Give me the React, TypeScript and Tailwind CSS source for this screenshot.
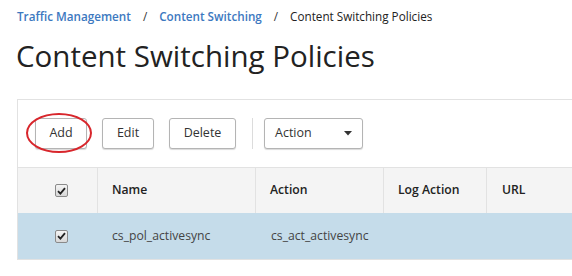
function Check() {
  return (
    <span className="inline-flex h-[13px] w-[13px] items-center justify-center rounded-[2px] border border-[#8a8a8a] bg-gradient-to-b from-[#f4f4f4] to-[#d8d8d8]">
      <svg width="9" height="8" viewBox="0 0 9 8">
        <path d="M1 4.2 L3.4 6.6 L8 1.2" fill="none" stroke="#222" strokeWidth="1.8" />
      </svg>
    </span>
  );
}

function Btn({ label, w }: { label: string; w: string }) {
  return (
    <button className={`h-[31px] ${w} rounded-[3px] border border-[#b4b4b4] bg-white text-[12.5px] text-[#333] shadow-[0_1px_1px_rgba(0,0,0,0.15)]`}>
      {label}
    </button>
  );
}

export default function App() {
  return (
    <div className="h-[276px] w-[572px] overflow-hidden bg-white font-['Open_Sans',sans-serif] text-[#333]">
      <div className="flex items-center gap-[12px] pl-[17px] pt-[7px] text-[11.7px] leading-[18px]">
        <span className="font-semibold text-[#3c78c0]">Traffic Management</span>
        <span>/</span>
        <span className="font-semibold text-[#3c78c0]">Content Switching</span>
        <span>/</span>
        <span className="text-[#222]">Content Switching Policies</span>
      </div>
      <h1 className="pl-[16px] pt-[11px] text-[29.5px] leading-[40px] text-[#222]">Content Switching Policies</h1>

      <div className="ml-[17px] mt-[23px] border-l border-t border-[#e2e2e2]">
        <div className="flex h-[67px] items-center pl-[17px]">
          <div className="relative">
            <Btn label="Add" w="w-[52px]" />
            <div className="pointer-events-none absolute left-[-9px] top-[-5px] h-[40px] w-[66px] rounded-[50%] border-[2.5px] border-[#d8262c]" />
          </div>
          <div className="ml-[15px]"><Btn label="Edit" w="w-[52px]" /></div>
          <div className="ml-[15px]"><Btn label="Delete" w="w-[67px]" /></div>
          <div className="ml-[16px] h-[31px] w-px bg-[#dcdcdc]" />
          <div className="ml-[11px] flex h-[31px] w-[99px] items-center justify-between rounded-[3px] border border-[#b4b4b4] bg-white pl-[10px] pr-[10px] text-[12.5px] text-[#333] shadow-[0_1px_1px_rgba(0,0,0,0.15)]">
            <span>Action</span>
            <svg width="8" height="5" viewBox="0 0 8 5"><path d="M0 0 L8 0 L4 4.5 Z" fill="#333" /></svg>
          </div>
        </div>
        <div className="grid h-[46px] grid-cols-[80px_158px_128px_103px_1fr] border-t border-[#e2e2e2] bg-[#f4f4f4] text-[12.2px] font-semibold text-[#222]">
          <div className="flex items-center justify-center border-r border-[#e2e2e2] pl-[7px]"><Check /></div>
          <div className="flex items-center border-r border-[#e2e2e2] pl-[14px]">Name</div>
          <div className="flex items-center border-r border-[#e2e2e2] pl-[14px]">Action</div>
          <div className="flex items-center border-r border-[#e2e2e2] pl-[14px]">Log Action</div>
          <div className="flex items-center pl-[15px]">URL</div>
        </div>
        <div className="grid h-[47px] grid-cols-[80px_158px_128px_103px_1fr] border-b border-[#e2e2e2] bg-[#c5dcea] text-[12.2px] text-[#444]">
          <div className="flex items-center justify-center pl-[7px]"><Check /></div>
          <div className="flex items-center pl-[14px]">cs_pol_activesync</div>
          <div className="flex items-center pl-[15px]">cs_act_activesync</div>
          <div />
          <div />
        </div>
      </div>
    </div>
  );
}
